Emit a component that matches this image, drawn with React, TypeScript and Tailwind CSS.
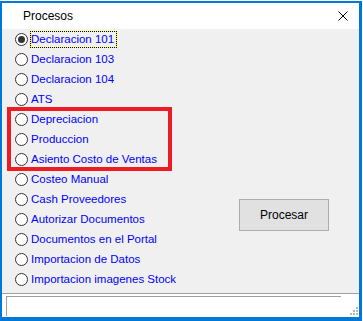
import { useState } from 'react';

const items = [
  'Declaracion 101',
  'Declaracion 103',
  'Declaracion 104',
  'ATS',
  'Depreciacion',
  'Produccion',
  'Asiento Costo de Ventas',
  'Costeo Manual',
  'Cash Proveedores',
  'Autorizar Documentos',
  'Documentos en el Portal',
  'Importacion de Datos',
  'Importacion imagenes Stock',
];

function Radio({ checked }: { checked: boolean }) {
  return (
    <span className="w-[13px] h-[13px] shrink-0 rounded-full border border-[#333333] bg-white flex items-center justify-center">
      {checked && <span className="w-[7px] h-[7px] rounded-full bg-[#333333]" />}
    </span>
  );
}

export default function App() {
  const [selected, setSelected] = useState(0);

  return (
    <div
      className="relative w-[363px] h-[321px] bg-white overflow-hidden"
      style={{ fontFamily: '"Liberation Sans", Arial, sans-serif' }}
    >
      <div className="absolute left-0 top-[1px] w-[362px] h-[320px] flex flex-col border-[#0078d7] border-l-2 border-t-2 border-r-[3px] border-b-4">
        {/* Title bar */}
        <div className="h-[26px] shrink-0 bg-white flex items-center justify-between pl-[21px] pr-[11px]">
          <span className="text-[12px] text-black">Procesos</span>
          <svg width="10" height="10" viewBox="0 0 10 10">
            <path d="M0.5 0.5 L9.5 9.5 M9.5 0.5 L0.5 9.5" stroke="#000" strokeWidth="1" />
          </svg>
        </div>

        {/* Body */}
        <div className="h-[264px] shrink-0 bg-[#f0f0f0] flex">
          <div className="w-[237px] flex flex-col">
            {items.map((label, i) => (
              <button
                key={label}
                onClick={() => setSelected(i)}
                className="h-[20px] flex items-center pl-[13px] text-left"
              >
                <Radio checked={selected === i} />
                <span
                  className={
                    selected === i
                      ? 'ml-[2px] border border-dotted border-black bg-[#ffff00] leading-[15px]'
                      : 'ml-[2px] border border-transparent leading-[15px]'
                  }
                >
                  <span className="block bg-[#f0f0f0] pr-[2px] text-[11.5px] text-[#0000ff] whitespace-nowrap">
                    {label}
                  </span>
                </span>
              </button>
            ))}
          </div>
          <div className="pt-[170px]">
            <button className="w-[90px] h-[32px] border border-[#adadad] bg-[#e1e1e1] text-[12px] text-black">
              Procesar
            </button>
          </div>
        </div>

        {/* Status bar */}
        <div className="flex-1 bg-white border-t border-[#a0a0a0] pl-[4px] pt-[2px] flex">
          <div className="w-[335px] h-[20px] border-t border-l border-[#a0a0a0]" />
          <div className="flex-1 flex items-end justify-end pr-[1px] pb-[2px]">
            <svg width="8" height="8" viewBox="0 0 8 8">
              <rect x="6" y="0" width="2" height="2" fill="#b8b8b8" />
              <rect x="3" y="3" width="2" height="2" fill="#b8b8b8" />
              <rect x="6" y="3" width="2" height="2" fill="#b8b8b8" />
              <rect x="0" y="6" width="2" height="2" fill="#b8b8b8" />
              <rect x="3" y="6" width="2" height="2" fill="#b8b8b8" />
              <rect x="6" y="6" width="2" height="2" fill="#b8b8b8" />
            </svg>
          </div>
        </div>
      </div>

      {/* Red highlight annotation */}
      <div className="absolute left-[7px] top-[107px] w-[165px] h-[64px] border-4 border-[#ed1c24]" />
    </div>
  );
}
